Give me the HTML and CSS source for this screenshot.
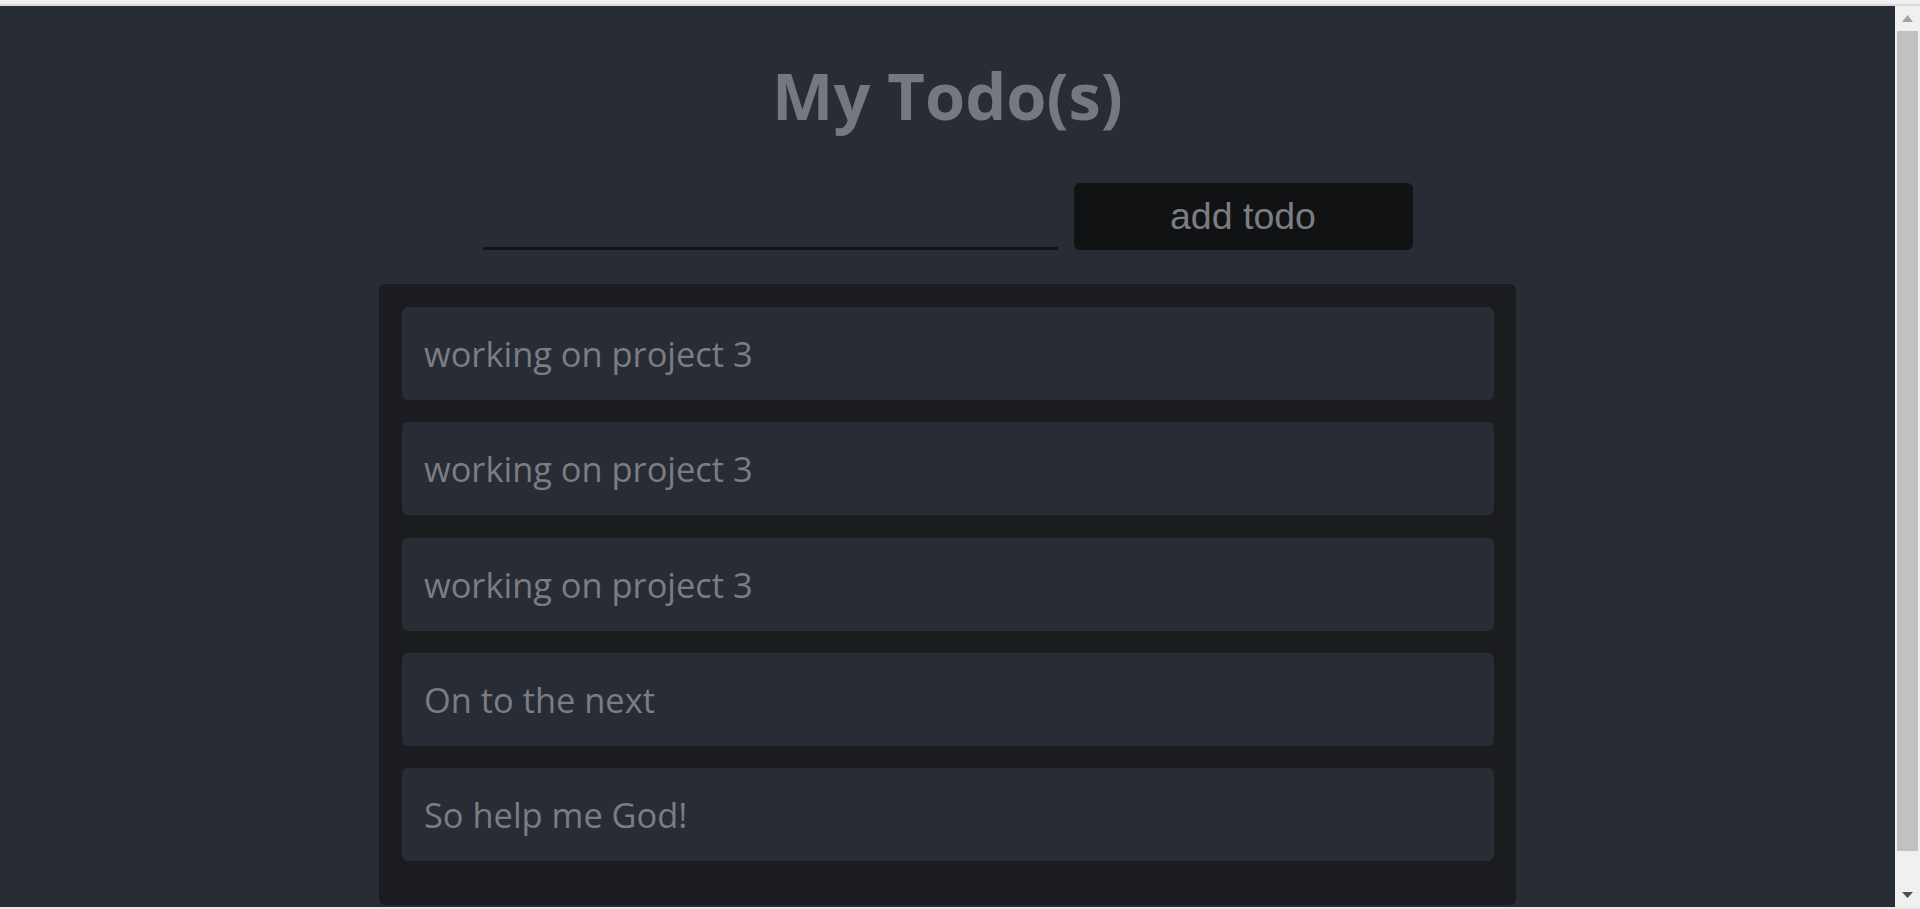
FILE: index.html
```html
<!DOCTYPE html>
<html lang="en">
<head>
<meta charset="utf-8">
<title>My Todo(s)</title>
<link rel="stylesheet" href="styles.css">
</head>
<body>
<div class="frame">
  <div class="topbar"></div>
  <div class="window">
    <main class="app">
      <h1 class="title">My Todo(s)</h1>
      <form class="add-row">
        <input class="todo-input" type="text" aria-label="New todo">
        <button class="add-btn" type="button">add todo</button>
      </form>
      <ul class="todo-list">
        <li class="todo-item">working on project 3</li>
        <li class="todo-item">working on project 3</li>
        <li class="todo-item">working on project 3</li>
        <li class="todo-item">On to the next</li>
        <li class="todo-item">So help me God!</li>
      </ul>
    </main>
    <div class="scrollbar">
      <div class="sb-btn">
        <svg width="11" height="7" viewBox="0 0 11 7"><polygon points="5.5,0 11,7 0,7" fill="#a3a3a3"/></svg>
      </div>
      <div class="sb-track"><div class="sb-thumb"></div></div>
      <div class="sb-btn">
        <svg width="11" height="6" viewBox="0 0 11 6"><polygon points="0,0 11,0 5.5,6" fill="#505050"/></svg>
      </div>
    </div>
  </div>
  <div class="bottombar"></div>
</div>
</body>
</html>
```

FILE: styles.css
```css
* { box-sizing: border-box; }

html, body {
  margin: 0;
  padding: 0;
  height: 909px;
  overflow: hidden;
  background: #f0f0f0;
}

.frame {
  display: flex;
  flex-direction: column;
  height: 909px;
}

.topbar {
  height: 6px;
  background: #f0f0f0;
  border-bottom: 2px solid #dadada;
  flex: none;
}

.window {
  display: flex;
  height: 901px;
  flex: none;
}

.app {
  flex: 1;
  background: #282c34;
  overflow: hidden;
  display: flex;
  flex-direction: column;
  align-items: center;
  padding-top: 57px;
}

.title {
  margin: 0;
  font-family: "Open Sans", "Noto Sans", sans-serif;
  font-weight: 700;
  font-size: 65px;
  line-height: 65px;
  color: #77787e;
}

.add-row {
  margin: 55px 0 0;
  display: flex;
  align-items: flex-end;
  gap: 16px;
  height: 67px;
}

.todo-input {
  width: 575px;
  height: 40px;
  background: transparent;
  border: none;
  border-bottom: 3px solid #121316;
  outline: none;
  color: #7b7d83;
  font-family: "Liberation Sans", Arial, sans-serif;
  font-size: 28px;
  padding: 0;
  margin: 0;
}

.add-btn {
  width: 339px;
  height: 67px;
  background: #111214;
  border: none;
  border-radius: 6px;
  color: #7c7d83;
  font-family: "Liberation Sans", Arial, sans-serif;
  font-size: 37.5px;
  padding: 0;
  cursor: pointer;
}

.todo-list {
  list-style: none;
  margin: 34px 0 0;
  width: 1137px;
  padding: 23px 22px 22px 23px;
  background: #1a1c20;
  border-radius: 6px;
  flex: none;
}

.todo-item {
  height: 93px;
  margin-bottom: 22.3px;
  background: #282c34;
  border-radius: 6px;
  padding: 0 22px;
  display: flex;
  align-items: center;
  font-family: "Open Sans", "Noto Sans", sans-serif;
  font-size: 34.4px;
  color: #7b7d83;
}

.scrollbar {
  width: 25px;
  flex: none;
  background: #f0f0f0;
  display: flex;
  flex-direction: column;
}

.sb-btn {
  height: 25px;
  display: flex;
  align-items: center;
  justify-content: center;
  flex: none;
}

.sb-track {
  flex: 1;
  padding: 0 2px;
}

.sb-thumb {
  height: 820px;
  background: #c1c1c1;
}

.bottombar {
  height: 2px;
  background: #e4e9f0;
  flex: none;
}
```
